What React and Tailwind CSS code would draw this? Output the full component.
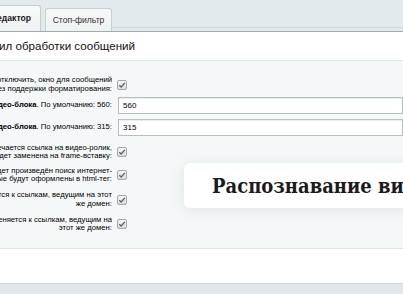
import React from "react";

function Check() {
  return (
    <span className="flex h-[10px] w-[10px] items-center justify-center rounded-[2px] border border-[#a3a9ad] bg-[linear-gradient(#f4f4f4,#dcdcdc)]">
      <svg width="8" height="8" viewBox="0 0 8 8">
        <path d="M1.3 4.2 L3.2 6 L6.8 1.8" fill="none" stroke="#5b6166" strokeWidth="1.3" />
      </svg>
    </span>
  );
}

function Label({ lines }) {
  return (
    <div className="flex w-[112px] shrink-0 flex-col items-end overflow-hidden text-[7.7px] leading-[8.5px] text-[#000]">
      {lines.map((l, i) => (
        <span key={i} className="whitespace-nowrap">{l}</span>
      ))}
    </div>
  );
}

function Row({ h, lines, control }) {
  return (
    <div className={`flex items-center gap-[5px] ${h}`}>
      <Label lines={lines} />
      {control}
    </div>
  );
}

function Input({ v }) {
  return (
    <div className="ml-px flex h-[17px] flex-1 items-center border border-[#b5bfc3] bg-white pl-[4px] text-[8px] text-[#000] shadow-[inset_0_1px_1px_rgba(0,0,0,0.08)]">
      {v}
    </div>
  );
}

export default function App() {
  return (
    <div className="relative h-[294px] w-[403px] overflow-hidden bg-[#e3eaec] font-['Liberation_Sans',Arial,sans-serif]">
      {/* tabs */}
      <div className="flex h-[31px] items-end">
        <div className="-ml-[30px] flex h-[26px] w-[71px] items-center justify-end whitespace-nowrap rounded-t-[3px] border border-b-0 border-[#c3cdd1] bg-[linear-gradient(#f7f9fa,#eef2f3)] pr-[9px] text-[8.6px] font-bold text-[#222]">
          Визуальный редактор
        </div>
        <div className="ml-[4px] flex h-[23px] w-[67px] items-center justify-center whitespace-nowrap rounded-t-[3px] border border-b-0 border-[#c6cfd3] bg-[linear-gradient(#f6f8f9,#eef2f3)] text-[8.6px] text-[#333]">
          Стоп-фильтр
        </div>
        <div className="mb-[3px] flex-1 border-b border-[#cdd6d9]" />
      </div>
      <div className="h-px bg-[#9fabaf]" />
      {/* header */}
      <div className="flex h-[29px] items-center overflow-hidden border-b border-[#dbe3e6] bg-white">
        <span className="-ml-[1px] whitespace-nowrap text-[11.6px] text-[#111]">ил обработки сообщений</span>
      </div>
      {/* panel */}
      <div className="h-[188px] border-b border-[#dde5e7] bg-[#f5f8f9] pt-[12px]">
        <Row h="h-[23px]" lines={["Если отключить, окно для сообщений", "будет без поддержки форматирования:"]} control={<Check />} />
        <Row
          h="h-[19px]"
          lines={[
            <span key="a"><b>Ширина видео-блока</b>. По умолчанию: 560:</span>,
          ]}
          control={<Input v="560" />}
        />
        <Row
          h="h-[25px]"
          lines={[
            <span key="b"><b>Высота видео-блока</b>. По умолчанию: 315:</span>,
          ]}
          control={<Input v="315" />}
        />
        <Row h="h-[24px]" lines={["Если в тексте встречается ссылка на видео-ролик,", "то она будет заменена на frame-вставку:"]} control={<Check />} />
        <Row h="h-[22px]" lines={["В тексте будет произведён поиск интернет-", "ссылок, которые будут оформлены в html-тег:"]} control={<Check />} />
        <Row h="h-[27px]" lines={["Применяется к ссылкам, ведущим на этот", "же домен:"]} control={<Check />} />
        <Row h="h-[22px]" lines={["Не применяется к ссылкам, ведущим на", "этот же домен:"]} control={<Check />} />
      </div>
      {/* white area */}
      <div className="h-[34px] bg-white" />
      <div className="h-[10px] border-t border-[#cfd8db] bg-[#e1e8ea]" />

      {/* overlay card */}
      <div className="absolute left-[184px] top-[163px] flex h-[45px] w-[280px] items-center rounded-[6px] bg-white pl-[28px] shadow-[0_2px_14px_rgba(60,80,90,0.12)]">
        <span className="whitespace-nowrap font-['DejaVu_Serif',serif] text-[20px] font-bold text-[#1b1b1b] [font-stretch:condensed]">
          Распознавание видео
        </span>
      </div>
    </div>
  );
}
